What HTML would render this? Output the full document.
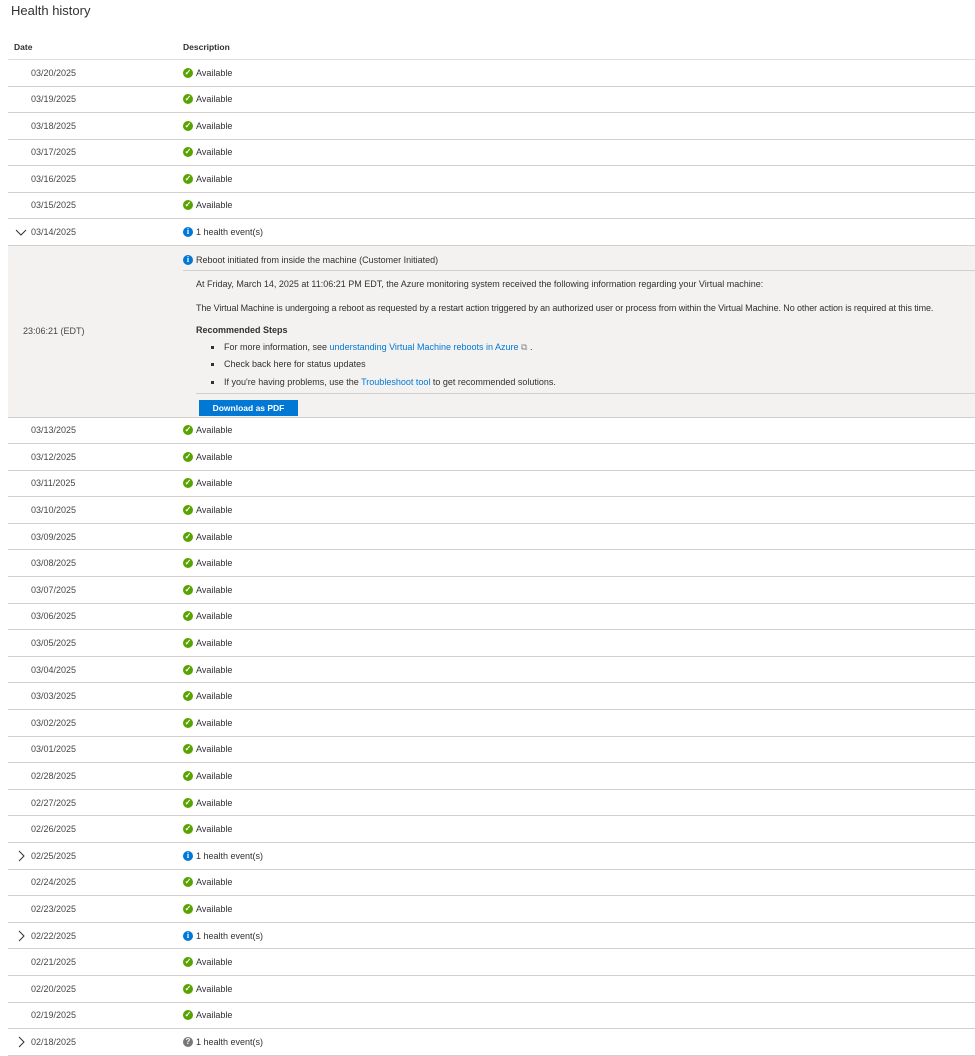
<!DOCTYPE html>
<html><head><meta charset="utf-8"><style>
*{box-sizing:border-box;margin:0;padding:0}
body{width:975px;height:1048px;overflow:hidden;background:#fff;font-family:"Liberation Sans",sans-serif;font-size:9px;color:#323130;position:relative}
h1{position:absolute;left:11px;top:3px;font-size:13px;font-weight:normal;color:#323130}
.hdr{position:absolute;left:8px;right:0;top:35px;height:25px;border-bottom:1px solid #e1dfdd;font-weight:bold;font-size:8.5px}
.hdr span{position:absolute;top:7px}
.r{position:relative;height:26.5px;border-bottom:1px solid #d2d0ce;margin-left:8px}
.b .r{height:26.6px}
.d{position:absolute;left:23px;top:50%;transform:translateY(-50%);color:#484644}
.s{position:absolute;left:175px;top:50%;transform:translateY(-50%);display:flex;align-items:center;gap:3px}
.ic{width:10px;height:10px;border-radius:50%;display:inline-flex;align-items:center;justify-content:center;color:#fff;font-size:8px;font-weight:bold;line-height:1}
.g{background:#57a300}.i{background:#0078d4;font-family:"Liberation Serif",serif}.q{background:#797775}
.ch{position:absolute;left:7px;top:50%;transform:translateY(-50%);width:12px;height:12px}
.top{position:absolute;left:0;right:0;top:60px}
.panel{height:172px;background:#f3f2f1;border-bottom:1px solid #d2d0ce;margin-left:8px;position:relative}
.panel .t{position:absolute;left:15px;top:80px;color:#484644}
.panel p{position:absolute;left:188px;white-space:nowrap}
.sep{position:absolute;left:183px;right:0;height:1px;background:#d2d0ce}
a{color:#0078d4;text-decoration:none}
.btn{position:absolute;left:191px;top:154px;width:99px;height:16px;background:#0078d4;color:#fff;font-weight:bold;font-size:8.5px;display:flex;align-items:center;justify-content:center}
.dot{position:absolute;left:203px;width:3px;height:3px;background:#323130}
</style></head><body>
<h1>Health history</h1>
<div class="hdr"><span style="left:6px">Date</span><span style="left:175px">Description</span></div>
<div class="top">
<div class="r"><span class="d">03/20/2025</span><span class="s"><span class="ic g">✓</span>Available</span></div>
<div class="r"><span class="d">03/19/2025</span><span class="s"><span class="ic g">✓</span>Available</span></div>
<div class="r"><span class="d">03/18/2025</span><span class="s"><span class="ic g">✓</span>Available</span></div>
<div class="r"><span class="d">03/17/2025</span><span class="s"><span class="ic g">✓</span>Available</span></div>
<div class="r"><span class="d">03/16/2025</span><span class="s"><span class="ic g">✓</span>Available</span></div>
<div class="r"><span class="d">03/15/2025</span><span class="s"><span class="ic g">✓</span>Available</span></div>
<div class="r"><svg class="ch" viewBox="0 0 12 12"><path d="M1 4l5 5 5-5" fill="none" stroke="#323130" stroke-width="1"/></svg><span class="d">03/14/2025</span><span class="s"><span class="ic i">i</span>1 health event(s)</span></div>
<div class="panel">
<span class="t">23:06:21 (EDT)</span>
<p style="left:175px;top:9px;display:flex;align-items:center;gap:3px"><span class="ic i">i</span>Reboot initiated from inside the machine (Customer Initiated)</p>
<div class="sep" style="top:24px;left:175px"></div>
<p style="top:33px">At Friday, March 14, 2025 at 11:06:21 PM EDT, the Azure monitoring system received the following information regarding your Virtual machine:</p>
<p style="top:57px;letter-spacing:-0.1px">The Virtual Machine is undergoing a reboot as requested by a restart action triggered by an authorized user or process from within the Virtual Machine. No other action is required at this time.</p>
<p style="top:79px;font-weight:bold">Recommended Steps</p>
<div class="dot" style="top:100px"></div><p style="left:216px;top:96px">For more information, see <a>understanding Virtual Machine reboots in Azure</a> <span style="color:#888">⧉</span> .</p>
<div class="dot" style="top:117px"></div><p style="left:216px;top:113px">Check back here for status updates</p>
<div class="dot" style="top:135px"></div><p style="left:216px;top:131px">If you're having problems, use the <a>Troubleshoot tool</a> to get recommended solutions.</p>
<div class="sep" style="top:147px;left:188px"></div>
<div class="btn">Download as PDF</div>
</div>
<div class="b">
<div class="r"><span class="d">03/13/2025</span><span class="s"><span class="ic g">✓</span>Available</span></div>
<div class="r"><span class="d">03/12/2025</span><span class="s"><span class="ic g">✓</span>Available</span></div>
<div class="r"><span class="d">03/11/2025</span><span class="s"><span class="ic g">✓</span>Available</span></div>
<div class="r"><span class="d">03/10/2025</span><span class="s"><span class="ic g">✓</span>Available</span></div>
<div class="r"><span class="d">03/09/2025</span><span class="s"><span class="ic g">✓</span>Available</span></div>
<div class="r"><span class="d">03/08/2025</span><span class="s"><span class="ic g">✓</span>Available</span></div>
<div class="r"><span class="d">03/07/2025</span><span class="s"><span class="ic g">✓</span>Available</span></div>
<div class="r"><span class="d">03/06/2025</span><span class="s"><span class="ic g">✓</span>Available</span></div>
<div class="r"><span class="d">03/05/2025</span><span class="s"><span class="ic g">✓</span>Available</span></div>
<div class="r"><span class="d">03/04/2025</span><span class="s"><span class="ic g">✓</span>Available</span></div>
<div class="r"><span class="d">03/03/2025</span><span class="s"><span class="ic g">✓</span>Available</span></div>
<div class="r"><span class="d">03/02/2025</span><span class="s"><span class="ic g">✓</span>Available</span></div>
<div class="r"><span class="d">03/01/2025</span><span class="s"><span class="ic g">✓</span>Available</span></div>
<div class="r"><span class="d">02/28/2025</span><span class="s"><span class="ic g">✓</span>Available</span></div>
<div class="r"><span class="d">02/27/2025</span><span class="s"><span class="ic g">✓</span>Available</span></div>
<div class="r"><span class="d">02/26/2025</span><span class="s"><span class="ic g">✓</span>Available</span></div>
<div class="r"><svg class="ch" viewBox="0 0 12 12"><path d="M4 1l5 5-5 5" fill="none" stroke="#323130" stroke-width="1"/></svg><span class="d">02/25/2025</span><span class="s"><span class="ic i">i</span>1 health event(s)</span></div>
<div class="r"><span class="d">02/24/2025</span><span class="s"><span class="ic g">✓</span>Available</span></div>
<div class="r"><span class="d">02/23/2025</span><span class="s"><span class="ic g">✓</span>Available</span></div>
<div class="r"><svg class="ch" viewBox="0 0 12 12"><path d="M4 1l5 5-5 5" fill="none" stroke="#323130" stroke-width="1"/></svg><span class="d">02/22/2025</span><span class="s"><span class="ic i">i</span>1 health event(s)</span></div>
<div class="r"><span class="d">02/21/2025</span><span class="s"><span class="ic g">✓</span>Available</span></div>
<div class="r"><span class="d">02/20/2025</span><span class="s"><span class="ic g">✓</span>Available</span></div>
<div class="r"><span class="d">02/19/2025</span><span class="s"><span class="ic g">✓</span>Available</span></div>
<div class="r"><svg class="ch" viewBox="0 0 12 12"><path d="M4 1l5 5-5 5" fill="none" stroke="#323130" stroke-width="1"/></svg><span class="d">02/18/2025</span><span class="s"><span class="ic q">?</span>1 health event(s)</span></div>
</div>
</div>
</body></html>
